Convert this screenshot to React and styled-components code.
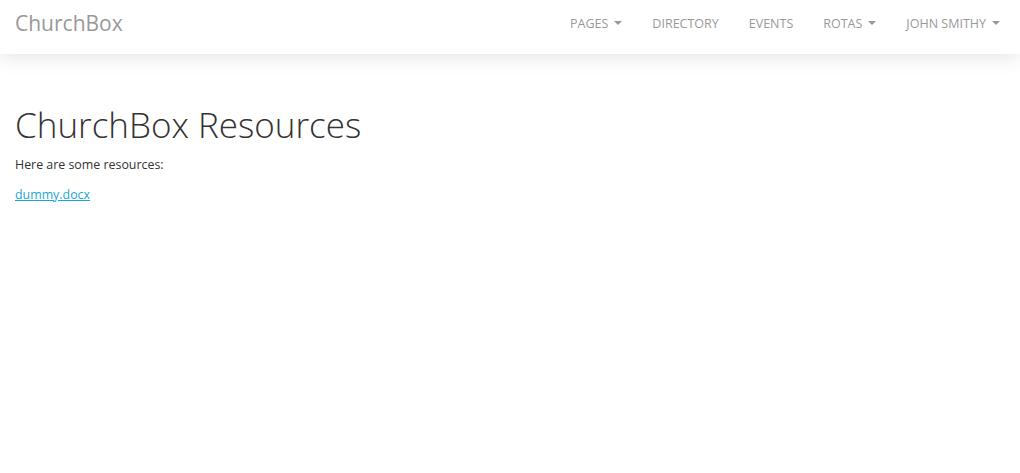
import React from 'react';
import styled, { createGlobalStyle } from 'styled-components';

const GlobalStyle = createGlobalStyle`
	body {
		margin: 0;
		background: #fff;
		font-family: 'Open Sans', 'Noto Sans', sans-serif;
		font-size: 12.4px;
		color: #333;
	}
`;

const Navbar = styled.nav`
	display: flex;
	align-items: center;
	justify-content: space-between;
	height: 54px;
	padding: 0 5px 0 15px;
	background: #fff;
	box-shadow: 0 1px 22px rgba(0, 0, 0, 0.13);
	position: relative;
	z-index: 2;
`;

const Brand = styled.a`
	font-size: 21px;
	color: #999;
	text-decoration: none;
	margin-top: -8px;
`;

const NavList = styled.ul`
	display: flex;
	list-style: none;
	margin: 0;
	padding: 0;
	margin-top: -8px;
`;

const NavItem = styled.li`
	a {
		display: flex;
		align-items: center;
		padding: 0 15px;
		font-size: 12.5px;
		color: #999;
		text-transform: uppercase;
		text-decoration: none;
	}
`;

const Caret = styled.span`
	display: inline-block;
	margin-left: 6px;
	width: 0;
	height: 0;
	border-top: 4px solid #999;
	border-left: 4px solid transparent;
	border-right: 4px solid transparent;
`;

const Main = styled.main`
	padding: 52px 15px 0;
`;

const Title = styled.h1`
	font-family: 'Open Sans', sans-serif;
	font-weight: 300;
	font-size: 35px;
	color: #333;
	margin: 0 0 10px;
	line-height: 1.1;
`;

const Text = styled.p`
	margin: 0 0 10px;
	line-height: 20px;
`;

const Link = styled.a`
	color: #1ba7d6;
	text-decoration: underline;
`;

const items = [
	{ label: 'Pages', caret: true },
	{ label: 'Directory' },
	{ label: 'Events' },
	{ label: 'Rotas', caret: true },
	{ label: 'John Smithy', caret: true },
];

const App = () => {
	return (
		<>
			<GlobalStyle />
			<Navbar>
				<Brand href='#'>ChurchBox</Brand>
				<NavList>
					{items.map((item) => (
						<NavItem key={item.label}>
							<a href='#'>
								{item.label}
								{item.caret && <Caret />}
							</a>
						</NavItem>
					))}
				</NavList>
			</Navbar>
			<Main>
				<Title>ChurchBox Resources</Title>
				<Text>Here are some resources:</Text>
				<Text>
					<Link href='#'>dummy.docx</Link>
				</Text>
			</Main>
		</>
	);
};

export default App;
